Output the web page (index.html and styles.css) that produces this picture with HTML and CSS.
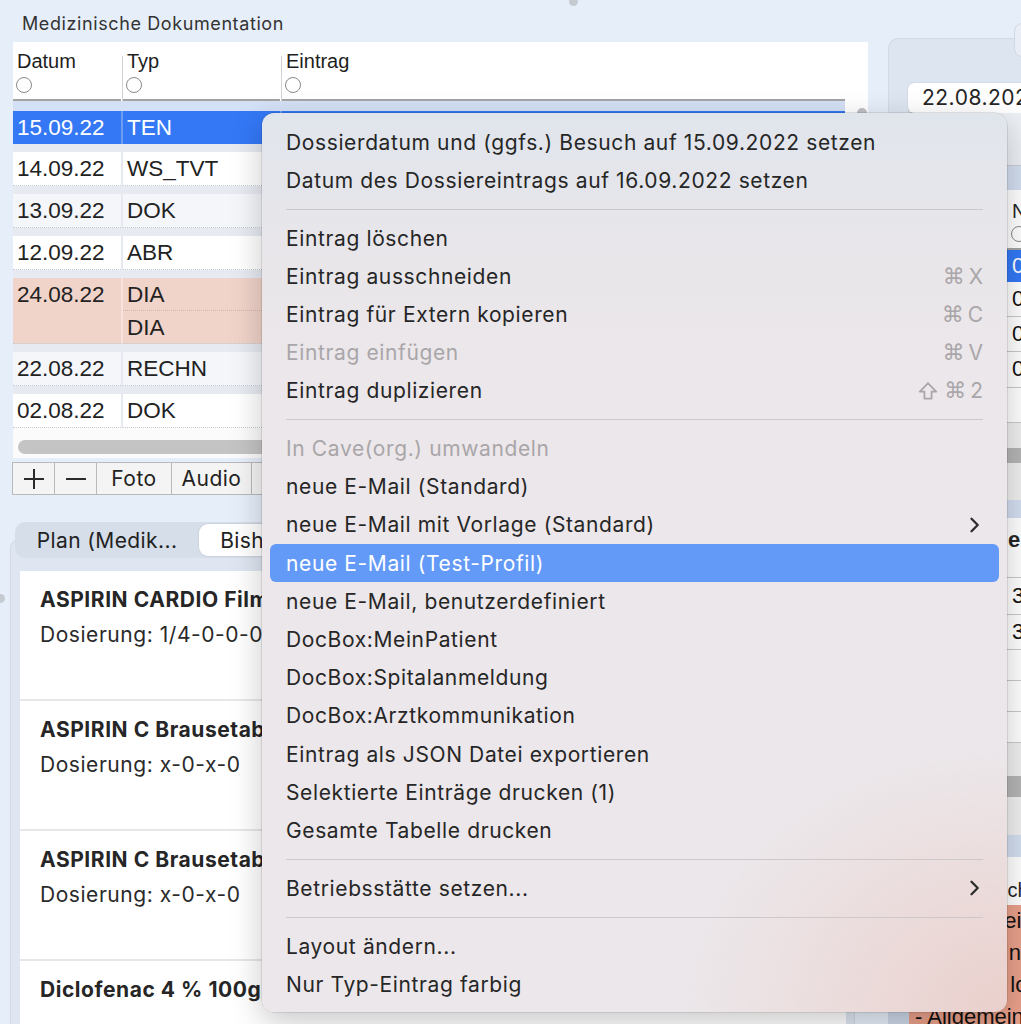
FILE: index.html
```html
<!DOCTYPE html>
<html lang="de">
<head>
<meta charset="utf-8">
<title>Medizinische Dokumentation</title>
<link rel="stylesheet" href="styles.css">
</head>
<body>
<div class="app">
  <div class="left">
    <div class="title">Medizinische Dokumentation</div>
    <div class="table">
      <div class="table-main">
        <div class="thead">
          <div class="th"><span class="th-label">Datum</span><i class="radio"></i></div>
          <div class="th"><span class="th-label">Typ</span><i class="radio"></i></div>
          <div class="th th-last"><span class="th-label">Eintrag</span><i class="radio"></i></div>
        </div>
        <div class="row sel"><div class="cell c1">15.09.22</div><div class="cell c2">TEN</div><div class="cell c3"></div></div>
        <div class="row"><div class="cell c1">14.09.22</div><div class="cell c2">WS_TVT</div><div class="cell c3"></div></div>
        <div class="row alt"><div class="cell c1">13.09.22</div><div class="cell c2">DOK</div><div class="cell c3"></div></div>
        <div class="row"><div class="cell c1">12.09.22</div><div class="cell c2">ABR</div><div class="cell c3"></div></div>
        <div class="row pink">
          <div class="cell c1"><span class="line">24.08.22</span></div>
          <div class="cell c2 split"><span class="line dotted">DIA</span><span class="line">DIA</span></div>
          <div class="cell c3"></div>
        </div>
        <div class="row alt"><div class="cell c1">22.08.22</div><div class="cell c2">RECHN</div><div class="cell c3"></div></div>
        <div class="row"><div class="cell c1">02.08.22</div><div class="cell c2">DOK</div><div class="cell c3"></div></div>
        <div class="hscroll"><div class="hthumb"></div></div>
      </div>
      <div class="vscroll"><div class="vknob"></div></div>
    </div>
    <div class="toolbar">
      <div class="tbtn tb-plus"><svg width="22" height="22" viewBox="0 0 22 22"><path d="M11 1v20M1 11h20" stroke="#2b2b2b" stroke-width="2" fill="none"/></svg></div>
      <div class="tbtn tb-minus"><svg width="20" height="4" viewBox="0 0 20 4"><path d="M0 2h20" stroke="#2b2b2b" stroke-width="2" fill="none"/></svg></div>
      <div class="tbtn tb-foto">Foto</div>
      <div class="tbtn tb-audio">Audio</div>
      <div class="tbtn tb-more"></div>
    </div>
    <div class="tabs">
      <div class="seg">Plan (Medik...</div>
      <div class="seg seg-on">Bisherige M...</div>
    </div>
    <div class="plan">
      <div class="list">
        <div class="med"><div class="med-name">ASPIRIN CARDIO Filmtabl</div><div class="med-dose">Dosierung: 1/4-0-0-0</div></div>
        <div class="med"><div class="med-name">ASPIRIN C Brausetabl</div><div class="med-dose">Dosierung: x-0-x-0</div></div>
        <div class="med"><div class="med-name">ASPIRIN C Brausetabl</div><div class="med-dose">Dosierung: x-0-x-0</div></div>
        <div class="med"><div class="med-name">Diclofenac 4 % 100g</div><div class="med-dose"></div></div>
      </div>
    </div>
  </div>

  <div class="right">
    <div class="rtop"><div class="rbtn"></div></div>
    <div class="rpanel">
      <div class="datefield">22.08.2022</div>
      <div class="rgap"></div>
      <div class="rstrip s24"></div>
      <div class="rhead"><div class="rc1"></div><div class="rc2"><span class="rh-label">N</span><i class="radio"></i></div></div>
      <div class="rrow rsel"><div class="rc1"></div><div class="rc2">0</div></div>
      <div class="rrow h35"><div class="rc1"></div><div class="rc2">0</div></div>
      <div class="rrow h35"><div class="rc1"></div><div class="rc2">0</div></div>
      <div class="rrow h35"><div class="rc1"></div><div class="rc2">0</div></div>
      <div class="rrow h35"><div class="rc1"></div><div class="rc2"></div></div>
      <div class="rtrack t1"><div class="rthumb"></div></div>
      <div class="rstrip s18"></div>
      <div class="rblock"><div class="rc1"></div><div class="rc2 rbold">eine</div></div>
      <div class="rrow h37"><div class="rc1"></div><div class="rc2">3:</div></div>
      <div class="rrow h35"><div class="rc1"></div><div class="rc2">3:</div></div>
      <div class="rrow h31"><div class="rc1"></div><div class="rc2"></div></div>
      <div class="rrow h31"><div class="rc1"></div><div class="rc2"></div></div>
      <div class="rrow h31"><div class="rc1"></div><div class="rc2"></div></div>
      <div class="rtrack t2"><div class="rthumb"></div></div>
      <div class="rstrip s22"></div>
      <div class="rblock2"><div class="rc1"></div><div class="rc2">Bericht</div></div>
      <div class="salmon">
        <div class="sal-gut"></div>
        <div class="sal-text">
          <div>- Heute keine</div>
          <div>- Thorax: normal</div>
          <div>- Herz: k. lo</div>
          <div>- Allgemein</div>
        </div>
      </div>
    </div>
  </div>
</div>

<i class="dot dot-top"></i>
<i class="dot dot-left"></i>

<div class="menu">
  <div class="mi">Dossierdatum und (ggfs.) Besuch auf 15.09.2022 setzen</div>
  <div class="mi">Datum des Dossiereintrags auf 16.09.2022 setzen</div>
  <div class="msep"></div>
  <div class="mi">Eintrag löschen</div>
  <div class="mi">Eintrag ausschneiden<span class="sc"><span class="sym">⌘</span>X</span></div>
  <div class="mi">Eintrag für Extern kopieren<span class="sc"><span class="sym">⌘</span>C</span></div>
  <div class="mi dis">Eintrag einfügen<span class="sc"><span class="sym">⌘</span>V</span></div>
  <div class="mi">Eintrag duplizieren<span class="sc"><svg class="shift" width="20" height="20" viewBox="0 0 20 20"><path d="M10 2.2L18.2 10.6H13.6V17.6H6.4V10.6H1.8Z" stroke="#a9a6a9" stroke-width="1.8" fill="none" stroke-linejoin="round"/></svg><span class="sym">⌘</span>2</span></div>
  <div class="msep"></div>
  <div class="mi dis">In Cave(org.) umwandeln</div>
  <div class="mi">neue E-Mail (Standard)</div>
  <div class="mi">neue E-Mail mit Vorlage (Standard)<svg class="chev" width="12" height="16" viewBox="0 0 12 16"><path d="M2.5 1.8l6.2 6.2-6.2 6.2" stroke="#2c2c2c" stroke-width="2.3" fill="none" stroke-linecap="round" stroke-linejoin="round"/></svg></div>
  <div class="mi hl">neue E-Mail (Test-Profil)</div>
  <div class="mi">neue E-Mail, benutzerdefiniert</div>
  <div class="mi">DocBox:MeinPatient</div>
  <div class="mi">DocBox:Spitalanmeldung</div>
  <div class="mi">DocBox:Arztkommunikation</div>
  <div class="mi">Eintrag als JSON Datei exportieren</div>
  <div class="mi">Selektierte Einträge drucken (1)</div>
  <div class="mi">Gesamte Tabelle drucken</div>
  <div class="msep"></div>
  <div class="mi">Betriebsstätte setzen...<svg class="chev" width="12" height="16" viewBox="0 0 12 16"><path d="M2.5 1.8l6.2 6.2-6.2 6.2" stroke="#2c2c2c" stroke-width="2.3" fill="none" stroke-linecap="round" stroke-linejoin="round"/></svg></div>
  <div class="msep"></div>
  <div class="mi">Layout ändern...</div>
  <div class="mi">Nur Typ-Eintrag farbig</div>
</div>
</body>
</html>
```
FILE: styles.css
```css
* { box-sizing: border-box; margin: 0; padding: 0; }
html, body { width: 1021px; height: 1024px; overflow: hidden; }
body {
  background: #e6eef9;
  font-family: Inter, "Noto Sans", sans-serif;
  color: #262626;
  position: relative;
}
.app { display: flex; height: 1024px; overflow: hidden; }

/* ---------- left column ---------- */
.left { width: 868px; flex: none; height: 1024px; overflow: hidden; padding-left: 13px; display: flex; flex-direction: column; }
.left > * { flex: none; }
.title { height: 42px; padding: 14px 0 0 9px; font-size: 18px; letter-spacing: 0.6px; line-height: 20px; color: #333; }

.table { height: 416px; background: #fff; display: flex; }
.table-main { flex: 1; display: flex; flex-direction: column; min-width: 0; }
.table-main > * { flex: none; }
.vscroll { width: 23px; flex: none; padding: 66px 0 0 12px; }
.vknob { width: 10px; height: 10px; border-radius: 50%; background: #bfc1c5; }

.thead { height: 59px; display: grid; grid-template-columns: 110px 159px 1fr; }
.th {
  position: relative;
  padding: 8px 0 0 4px;
  margin-right: 2px;
  border-bottom: 2px solid #a4a4a4;
  font-family: "Liberation Sans", Arial, sans-serif;
  font-size: 20px; line-height: 22px; color: #1e1e1e;
}
.th::after { content: ""; position: absolute; right: -2px; top: 14px; bottom: -2px; width: 1px; background: #d3d3d3; }
.th-last { margin-right: 0; }
.th-last::after { display: none; }
.th-label { display: block; height: 22px; }
.radio { display: block; width: 16px; height: 16px; margin-top: 5px; margin-left: -1px; border: 1px solid #8a8a8a; border-radius: 50%; background: #fff; }

.row {
  display: grid; grid-template-columns: 110px 159px 1fr;
  border-top: 8px solid #e7eaf1;
  height: 42px;
  background: #fff;
  font-family: "Liberation Sans", Arial, sans-serif;
  font-size: 22.5px; color: #222;
}
.row.alt { background: #f4f6fa; }
.row.sel { border-top: 10px solid #d4e0f5; height: 43px; background: #3478f6; color: #fff; }
.row.pink { background: #f0d3c9; height: 74px; }
.cell { padding-left: 4px; line-height: 33px; border-bottom: 1px dotted #c5c9d1; white-space: nowrap; overflow: hidden; }
.sel .cell { border-bottom: none; }
.c1, .c2 { border-right: 2px solid #e6e9ef; }
.sel .c1, .sel .c2 { border-right-color: #6d9cf3; }
.pink .c1, .pink .c2 { border-right-color: #f6e3dc; }
.cell .line { display: block; height: 33px; }
.split { padding-left: 0; }
.split .line { padding-left: 4px; }
.line.dotted { border-bottom: 1px dotted #d6b2a6; }

.hscroll { margin-top: auto; height: 30px; padding: 12px 0 0 5px; background: #fbfbfc; }
.hthumb { height: 14px; width: 820px; border-radius: 7px; background: #c4c4c4; }

.toolbar { margin: 4px 0 0 -1px; height: 33px; display: flex; }
.tbtn {
  height: 33px; display: flex; align-items: center; justify-content: center;
  border: 1px solid #b9b9b9; border-left: none; background: #f4f4f4;
  font-size: 21px; letter-spacing: 0.5px; color: #222;
}
.tb-plus { width: 43px; border-left: 1px solid #b9b9b9; }
.tb-minus { width: 42px; }
.tb-foto { width: 75px; }
.tb-audio { width: 80px; }
.tb-more { width: 80px; }

.tabs {
  margin: 27px 0 0 2px; height: 36px; width: 370px;
  display: flex; padding: 2px 0;
  background: #d6deea; border-radius: 10px;
  position: relative; z-index: 1;
}
.seg { width: 184px; display: flex; align-items: center; justify-content: center; font-size: 21px; letter-spacing: 0.4px; color: #222; border-radius: 9px; white-space: nowrap; overflow: hidden; }
.seg-on { background: #fff; box-shadow: 0 0 2px rgba(0,0,0,.15); }

.plan {
  margin: -18px 0 0 -3px; height: 502px; width: 845px;
  background: #dfe6f1; border: 1px solid #d2dae6; border-bottom: none; border-radius: 8px 8px 0 0;
  padding: 30px 8px 0 9px; overflow: hidden;
}
.list { background: #fff; height: 100%; overflow: hidden; }
.med { height: 130px; border-bottom: 2px solid #e7e7e9; padding: 11px 0 0 20px; line-height: 35px; font-size: 21px; letter-spacing: 0.55px; white-space: nowrap; overflow: hidden; }
.med-name { font-weight: 700; color: #262626; }
.med-dose { color: #2a2a2a; }

/* ---------- right column ---------- */
.right { margin-left: 20px; flex: 1; min-width: 0; height: 1024px; overflow: hidden; display: flex; flex-direction: column; }
.right > * { flex: none; }
.rtop { height: 34px; margin-top: 23px; margin-bottom: -19px; padding-left: 126px; position: relative; z-index: 1; }
.rbtn { width: 80px; height: 34px; border-radius: 8px; background: #e9eef6; border: 1px solid #d0d8e4; }
.rpanel {
  height: 990px; width: 400px;
  background: #dde5f1; border: 1px solid #d2dae6; border-right: none; border-bottom: none;
  border-radius: 10px 0 0 0;
  padding: 44px 0 0 19px;
  display: flex; flex-direction: column;
}
.rpanel > * { flex: none; }
.datefield {
  height: 30px; background: #fff; border-radius: 6px 0 0 6px;
  padding-left: 14px; font-size: 21px; letter-spacing: 0.5px; line-height: 30px; color: #262626;
  box-shadow: 0 0.5px 1.5px rgba(0,0,0,.2);
}
.rgap { height: 53px; background: #eceff4; border-bottom: 1px solid #c9ced6; }
.rstrip { background: #d3def0; }
.s24 { height: 24px; }
.s18 { height: 18px; }
.s22 { height: 22px; }
.rhead { height: 60px; background: #fff; display: flex; border-bottom: 2px solid #a4a4a4;
  font-family: "Liberation Sans", Arial, sans-serif; font-size: 20px; line-height: 22px; }
.rc1 { width: 100px; flex: none; }
.rc2 { flex: 1; padding-left: 4px; white-space: nowrap; }
.rhead .rc2 { padding-top: 10px; }
.rhead .radio { margin-top: 4px; }
.rrow { display: flex; align-items: center; background: #fff; border-bottom: 1px solid #c9c9c9;
  font-family: "Liberation Sans", Arial, sans-serif; font-size: 22px; color: #111; }
.rrow.rsel { background: #3478f6; color: #fff; height: 32px; border-bottom: none; }
.h35 { height: 35.2px; }
.h37 { height: 37px; }
.h31 { height: 31px; }
.rtrack { background: #efefef; }
.t1 { height: 77px; padding-top: 25px; }
.t2 { height: 92px; padding-top: 33px; }
.t1 .rthumb { height: 15px; }
.t2 .rthumb { height: 21px; }
.rthumb { background: #b5b5b5; border-radius: 8px; margin-left: 10px; }
.rblock { height: 60px; display: flex; background: #fff; border-bottom: 1px solid #c9c9c9;
  font-family: "Liberation Sans", Arial, sans-serif; font-size: 22px; line-height: 44px; }
.rblock .rc2 { padding-left: 0; }
.rbold { font-weight: 700; }
.rblock2 { height: 48px; display: flex; background: #fff;
  font-family: "Liberation Sans", Arial, sans-serif; font-size: 20px; line-height: 66px; }
.rblock2 .rc2 { padding-left: 0; text-indent: -36px; }
.salmon { height: 140px; display: flex; margin-left: -39px; }
.sal-gut { width: 40px; flex: none; background: #ccd7e7; }
.sal-text { flex: 1; background: #e9a08a; padding: 0 0 0 6px;
  font-family: "Liberation Sans", Arial, sans-serif; font-size: 22px; line-height: 32px; color: #111; white-space: nowrap; }

/* splitter dots */
.dot { position: absolute; width: 9px; height: 9px; border-radius: 50%; background: #c6cad1; }
.dot-top { left: 569px; top: -3px; }
.dot-left { left: -4px; top: 594px; }

/* ---------- context menu ---------- */
.menu {
  position: absolute; left: 262px; top: 113px; width: 745px;
  padding: 10px 8px 9px;
  border-radius: 12px;
  background:
    radial-gradient(ellipse 320px 260px at 100% 100%, rgba(233,192,184,.6), rgba(233,192,184,0)),
    linear-gradient(180deg, #e0e5ec 0px, #e8e6ea 130px, #ece7ea 260px);
  box-shadow: 0 10px 32px rgba(0,0,0,.22), 0 0 0 0.5px rgba(0,0,0,.18);
  z-index: 10;
}
.mi {
  height: 38.2px; display: flex; align-items: center;
  padding: 0 16px; border-radius: 6px;
  font-size: 21px; letter-spacing: 0.62px; color: #262626; white-space: nowrap;
}
.mi.dis { color: #a9a6a9; }
.mi.hl { background: #6399f7; color: #fff; }
.msep { height: 19.6px; display: flex; align-items: center; margin: 0 16px; }
.msep::before { content: ""; display: block; width: 100%; height: 1px; background: #cdc8cc; }
.sc { margin-left: auto; color: #a9a6a9; display: flex; align-items: center; gap: 4px; letter-spacing: 0; }
.sym { font-family: "DejaVu Sans", sans-serif; font-size: 22px; }
.shift { margin-right: 2px; }
.chev { margin-left: auto; margin-right: 2px; }
```
